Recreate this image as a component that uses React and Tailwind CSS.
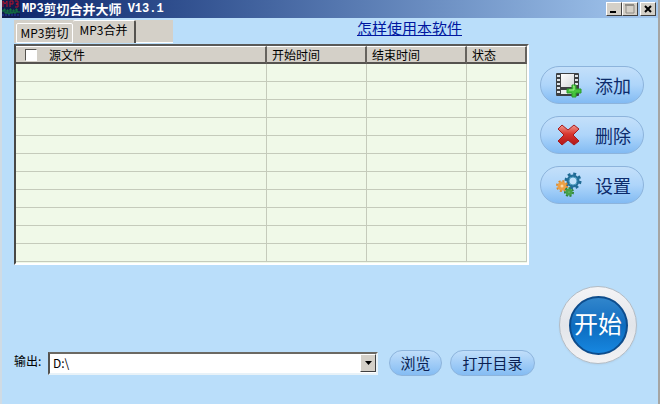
import clsx from 'clsx'

const ROWS = Array.from({ length: 11 }, (_, i) => i)

const AppIcon = () => (
  <svg width="18" height="18" viewBox="0 0 18 18" aria-hidden="true">
    <rect width="18" height="18" fill="#101c4c" />
    <path
      d="M1 7V1l2 3 2-3v6M8 7V1h3v3H8M13 1h3v3h-2 2v3h-3"
      fill="none"
      stroke="#b3122c"
      strokeWidth="1"
    />
    <path
      d="M0 11h2V9h1v4h2v-3h1v4h2V9h1v4h2v-3h1v3h2V9h1v3h3"
      fill="none"
      stroke="#14853c"
      strokeWidth="1"
    />
    <path d="M0 15h18" stroke="#2638a8" strokeDasharray="2 1" />
  </svg>
)

const FilmIcon = () => (
  <svg width="28" height="26" viewBox="0 0 28 26" aria-hidden="true">
    <defs>
      <linearGradient id="film" x1="0" y1="0" x2="1" y2="1">
        <stop offset="0" stopColor="#ffffff" />
        <stop offset="1" stopColor="#d3d7da" />
      </linearGradient>
    </defs>
    <rect x="1" y="1" width="23" height="23" rx="1" fill="#3d4043" />
    <rect x="6" y="2" width="13" height="13" fill="url(#film)" />
    <rect x="6" y="18" width="13" height="4" fill="#eceef0" />
    <path
      d="M2 4h3M2 8h3M2 12h3M2 16h3M2 20h3M20 4h3M20 8h3M20 12h3M20 20h3"
      stroke="#dfe4e8"
      strokeWidth="2"
    />
    <path
      d="M17 13h4v4h5v4h-5v4h-4v-4h-5v-4h5z"
      fill="#46c43c"
      stroke="#2a9a2a"
      strokeWidth="1"
    />
    <path d="M18 14h1v4h-5" fill="none" stroke="#a9f090" />
  </svg>
)

const CrossIcon = () => (
  <svg width="24" height="22" viewBox="0 0 24 22" aria-hidden="true">
    <defs>
      <linearGradient id="cross" x1="0" y1="0" x2="0" y2="1">
        <stop offset="0" stopColor="#f29a90" />
        <stop offset="0.45" stopColor="#d9362f" />
        <stop offset="1" stopColor="#b01518" />
      </linearGradient>
    </defs>
    <path
      d="M5 1l6 5 6-5 5 4-6 6 6 6-5 4-6-5-6 5-4-4 6-6-6-6z"
      fill="url(#cross)"
      stroke="#a51a1d"
      strokeLinejoin="round"
    />
  </svg>
)

const GearsIcon = () => (
  <svg width="26" height="26" viewBox="0 0 26 26" aria-hidden="true">
    <g fill="none">
      <circle cx="17" cy="9" r="7" stroke="#1f6a94" strokeWidth="3" strokeDasharray="2.800 2.700" />
      <circle cx="17" cy="9" r="5" stroke="#236f99" strokeWidth="3" />
      <circle cx="17" cy="9" r="4" fill="#bfe0fa" stroke="#4c9cc0" strokeWidth="1" />
      <circle cx="6" cy="14" r="5" stroke="#dd8a2a" strokeWidth="2" strokeDasharray="2 1.900" />
      <circle cx="6" cy="14" r="3" fill="#fbd9a4" stroke="#eda045" strokeWidth="3" />
      <circle cx="13" cy="20" r="4" stroke="#2f8438" strokeWidth="2" strokeDasharray="2 1.600" />
      <circle cx="13" cy="20" r="2" fill="#b4e0a0" stroke="#45a04a" strokeWidth="3" />
    </g>
  </svg>
)

const CaptionButton = ({ label, className, children }) => (
  <button
    type="button"
    aria-label={label}
    className={clsx(
      'flex h-[14px] w-4 items-center justify-center border border-t-white border-l-white border-r-[#404040] border-b-[#404040] bg-[#d4d0c8]',
      className
    )}
  >
    <svg width="12" height="10" viewBox="0 0 12 10" aria-hidden="true">
      {children}
    </svg>
  </button>
)

const SideButton = ({ icon, children }) => (
  <button
    type="button"
    className="flex h-[38px] w-full items-center rounded-full border border-[#8db4dc] bg-linear-to-b from-[#c4e0fa] via-[#aed5fa] to-[#82bbf3] pr-3 pl-[14px] text-[18px] text-[#0c2b6b]"
  >
    <span className="flex w-7 justify-center">{icon}</span>
    <span className="flex-1 text-right">{children}</span>
  </button>
)

const PillButton = ({ className, children }) => (
  <button
    type="button"
    className={clsx(
      'h-[26px] shrink-0 rounded-full border border-[#8db4dc] bg-linear-to-b from-[#c0defa] to-[#84bcf3] text-[15px] leading-6 text-[#0a1f52]',
      className
    )}
  >
    {children}
  </button>
)

const HeaderCell = ({ className, children }) => (
  <th
    scope="col"
    className={clsx(
      'h-[18px] border-t border-r-2 border-b-2 border-t-white border-r-[#66635e] border-b-[#55534f] bg-[#d4d0c8] p-0 text-left font-normal',
      className
    )}
  >
    {children}
  </th>
)

const FileTable = () => (
  <div className="mr-[6px] h-[221px] overflow-hidden border-2 border-t-[#5a5a58] border-r-white border-b-white border-l-[#484846] bg-[#f0f9e8]">
    <table className="w-full table-fixed border-separate border-spacing-0 text-xs leading-[15px] text-black">
      <colgroup>
        <col />
        <col className="w-[100px]" />
        <col className="w-[100px]" />
        <col className="w-[60px]" />
      </colgroup>
      <thead>
        <tr>
          <HeaderCell>
            <label className="flex items-center gap-3 pl-[9px]">
              <input
                type="checkbox"
                className="size-3 appearance-none border border-t-[#55534f] border-r-white border-b-white border-l-[#55534f] bg-white"
              />
              源文件
            </label>
          </HeaderCell>
          <HeaderCell className="pl-[5px]">开始时间</HeaderCell>
          <HeaderCell className="pl-[5px]">结束时间</HeaderCell>
          <HeaderCell className="pl-[5px]">状态</HeaderCell>
        </tr>
      </thead>
      <tbody>
        {ROWS.map((row) => (
          <tr key={row}>
            <td className="h-[18px] border-r border-b border-[#c5cbbb] p-0" />
            <td className="border-r border-b border-[#c5cbbb] p-0" />
            <td className="border-r border-b border-[#c5cbbb] p-0" />
            <td className="border-r border-b border-[#c5cbbb] p-0" />
          </tr>
        ))}
      </tbody>
    </table>
  </div>
)

const App = () => {
  return (
    <div className="flex min-h-screen flex-col border-r-2 border-l-2 border-r-[#a5a5a3] border-l-[#d0dbe4] bg-[#badefa] font-['Noto_Sans_CJK_SC',sans-serif]">
      <header className="flex h-[18px] items-center bg-linear-to-r from-[#0d246b] to-[#a5c9f0] pr-[2px] text-white">
        <AppIcon />
        <h1 className="flex flex-1 items-center pl-[2px] text-[13px] leading-[18px] font-bold">
          <span className="font-['Liberation_Mono',monospace] text-xs">MP3</span>
          <span>剪切合并大师</span>
          <span className="pl-[6px] font-['Liberation_Mono',monospace] text-xs">V13.1</span>
        </h1>
        <CaptionButton label="最小化">
          <path d="M2 8h6" stroke="#000" strokeWidth="2" />
        </CaptionButton>
        <CaptionButton label="最大化">
          <path d="M2 1h8v8H2z" fill="none" stroke="#8f8c86" strokeWidth="1" />
          <path d="M1 1h9" stroke="#8f8c86" strokeWidth="2" />
        </CaptionButton>
        <CaptionButton label="关闭" className="ml-[2px]">
          <path d="M3 2l6 6M9 2l-6 6" stroke="#000" strokeWidth="2" />
        </CaptionButton>
      </header>

      <main className="flex flex-1 gap-[5px] pr-[14px] pl-3">
        <div className="flex min-w-0 flex-1 flex-col">
          <div className="flex h-[26px] items-end text-xs">
            <div role="tablist" className="flex h-[23px] items-end self-center bg-[#d4d0c8] pl-[2px]">
              <button
                type="button"
                role="tab"
                aria-selected="false"
                className="h-5 w-[57px] rounded-t-xs border border-white text-center leading-[18px]"
              >
                MP3剪切
              </button>
              <button
                type="button"
                role="tab"
                aria-selected="true"
                className="h-[23px] w-[63px] rounded-t-xs border-t border-r-2 border-t-white border-r-[#55534f] pb-[3px] text-center leading-[18px]"
              >
                MP3合并
              </button>
              <span className="h-[22px] w-[37px] border-b border-white" />
            </div>
            <div className="mr-[73px] flex flex-1 justify-end self-start">
              <a href="#help" className="text-[15px] leading-5 text-[#0017a0] underline">
                怎样使用本软件
              </a>
            </div>
          </div>

          <FileTable />

          <div className="mt-[85px] flex h-[26px] items-center">
            <label htmlFor="output" className="w-[34px] shrink-0 pb-1 text-xs text-black">
              输出:
            </label>
            <div className="relative min-w-0 flex-1">
              <select
                id="output"
                className="block h-[23px] w-full appearance-none border-2 border-t-[#6b6963] border-r-[#e8f2f8] border-b-[#e8f2f8] border-l-[#55534f] bg-white pl-[3px] text-xs leading-[18px] text-black"
              >
                <option>D:\</option>
              </select>
              <span className="pointer-events-none absolute top-[2px] right-[2px] flex h-[18px] w-4 items-center justify-center border border-t-white border-r-[#404040] border-b-[#404040] border-l-white bg-[#d4d0c8]">
                <svg width="7" height="4" viewBox="0 0 7 4" aria-hidden="true">
                  <path d="M0 0h7L3.500 4z" fill="#000" />
                </svg>
              </span>
            </div>
            <PillButton className="ml-[11px] w-[53px]">浏览</PillButton>
            <PillButton className="ml-2 w-[85px]">打开目录</PillButton>
          </div>
        </div>

        <aside className="flex w-[104px] shrink-0 flex-col gap-3 pt-12">
          <SideButton icon={<FilmIcon />}>添加</SideButton>
          <SideButton icon={<CrossIcon />}>删除</SideButton>
          <SideButton icon={<GearsIcon />}>设置</SideButton>
          <button
            type="button"
            className="mt-[70px] mr-[7px] flex size-[78px] items-center justify-center self-end rounded-full border border-[#b4bcc4] bg-linear-to-b from-[#f4f4f6] via-[#e2e5ea] to-[#f2f2f4] shadow-xs"
          >
            <span className="flex size-[59px] items-center justify-center rounded-full border-2 border-[#0d4c8c] bg-linear-to-b from-[#3186cc] via-[#0d6cbf] to-[#1787e0] text-2xl leading-6 whitespace-nowrap text-white">
              <span className="pb-1">开始</span>
            </span>
          </button>
        </aside>
      </main>
    </div>
  )
}

export default App
